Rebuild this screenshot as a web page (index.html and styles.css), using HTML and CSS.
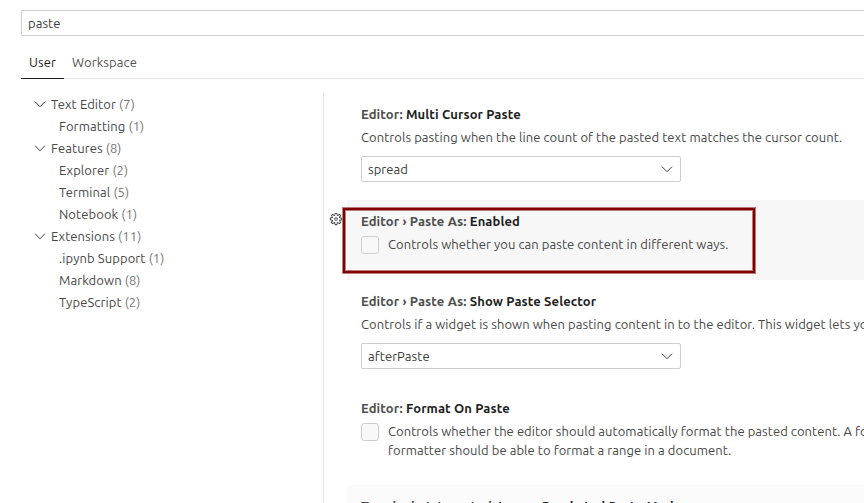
FILE: index.html
```html
<!DOCTYPE html>
<html lang="en">
<head>
    <meta charset="UTF-8">
    <meta name="viewport" content="width=device-width, initial-scale=1.0">
    <title>Settings</title>
    <link rel="stylesheet" href="styles.css">
</head>
<body>
    <svg class="symbols" xmlns="http://www.w3.org/2000/svg">
        <symbol id="chevron" viewBox="0 0 16 16">
            <path d="M3 5.7L8 10.7L13 5.7" fill="none" stroke="currentColor" stroke-width="1"/>
        </symbol>
    </svg>

    <div class="settings-editor">
        <div class="search-box">paste</div>

        <div class="tabs">
            <div class="tab active">User</div>
            <div class="tab">Workspace</div>
        </div>

        <div class="settings-body">
            <div class="toc">
                <div class="toc-group"><svg class="chevron"><use href="#chevron"/></svg>Text Editor <span class="count">(7)</span></div>
                <div class="toc-entry">Formatting <span class="count">(1)</span></div>
                <div class="toc-group"><svg class="chevron"><use href="#chevron"/></svg>Features <span class="count">(8)</span></div>
                <div class="toc-entry">Explorer <span class="count">(2)</span></div>
                <div class="toc-entry">Terminal <span class="count">(5)</span></div>
                <div class="toc-entry">Notebook <span class="count">(1)</span></div>
                <div class="toc-group"><svg class="chevron"><use href="#chevron"/></svg>Extensions <span class="count">(11)</span></div>
                <div class="toc-entry">.ipynb Support <span class="count">(1)</span></div>
                <div class="toc-entry">Markdown <span class="count">(8)</span></div>
                <div class="toc-entry">TypeScript <span class="count">(2)</span></div>
            </div>

            <div class="settings-list">
                <div class="setting">
                    <div class="title"><span class="category">Editor:</span> Multi Cursor Paste</div>
                    <div class="description">Controls pasting when the line count of the pasted text matches the cursor count.</div>
                    <div class="select">spread<svg class="chevron"><use href="#chevron"/></svg></div>
                </div>

                <div class="setting focused">
                    <svg class="gear" viewBox="0 0 16 16">
                        <path d="M9.1 4.4L8.6 2H7.4l-.5 2.4-.7.3-2-1.3-.9.8 1.3 2-.2.7-2.4.5v1.2l2.4.5.3.8-1.3 2 .8.8 2-1.3.8.3.4 2.3h1.200l.5-2.400.8-.3 2 1.300.8-.8-1.300-2 .3-.8 2.300-.4V7.400l-2.400-.5-.3-.8 1.300-2-.8-.8-2 1.300-.7-.2zM9.400 1l.5 2.400L12 2.100l2 2-1.400 2.100 2.400.4v2.800l-2.400.5L14 12l-2 2-2.100-1.400-.5 2.400H6.600l-.5-2.400L4 13.900l-2-2 1.400-2.100L1 9.400V6.600l2.400-.5L2.100 4l2-2 2.100 1.400.4-2.400h2.800zm.6 7c0 1.100-.9 2-2 2s-2-.9-2-2 .9-2 2-2 2 .9 2 2zM8 9c.6 0 1-.4 1-1s-.4-1-1-1-1 .4-1 1 .4 1 1 1z"/>
                    </svg>
                    <div class="title"><span class="category">Editor › Paste As:</span> Enabled</div>
                    <div class="check-row">
                        <div class="checkbox"></div>
                        <div class="description">Controls whether you can paste content in different ways.</div>
                    </div>
                    <div class="highlight"></div>
                </div>

                <div class="setting">
                    <div class="title"><span class="category">Editor › Paste As:</span> Show Paste Selector</div>
                    <div class="description">Controls if a widget is shown when pasting content in to the editor. This widget lets you control how the file is pasted.</div>
                    <div class="select">afterPaste<svg class="chevron"><use href="#chevron"/></svg></div>
                </div>

                <div class="setting multiline">
                    <div class="title"><span class="category">Editor:</span> Format On Paste</div>
                    <div class="check-row">
                        <div class="checkbox"></div>
                        <div class="description">Controls whether the editor should automatically format the pasted content. A formatter must be available and the<br>formatter should be able to format a range in a document.</div>
                    </div>
                </div>

                <div class="setting hovered">
                    <div class="title"><span class="category">Terminal › Integrated:</span> Ignore Bracketed Paste Mode</div>
                </div>
            </div>
        </div>
    </div>
</body>
</html>
```

FILE: styles.css
```css
* {
    box-sizing: border-box;
}
body {
    margin: 0;
    height: 503px;
    overflow: hidden;
    background-color: #fff;
    color: #3b3b3b;
    font-family: Ubuntu, "Noto Sans", sans-serif;
    font-size: 13px;
    letter-spacing: 0.06px;
    white-space: nowrap;
}
.symbols {
    display: none;
}
.settings-editor {
    padding: 10px 0 0 21px;
    height: 503px;
    display: flex;
    flex-direction: column;
    overflow: hidden;
}
.search-box {
    height: 26px;
    padding-left: 6px;
    border: 1px solid #cecece;
    border-right: 0;
    border-radius: 2px 0 0 2px;
    line-height: 25px;
    flex-shrink: 0;
}
.tabs {
    display: flex;
    height: 33px;
    margin-top: 10px;
    border-bottom: 1px solid #e5e5e5;
    flex-shrink: 0;
}
.tab {
    height: 33px;
    padding: 0 8px;
    line-height: 33px;
    color: #555;
    letter-spacing: 0.1px;
}
.tab.active {
    width: 43px;
    color: #1f1f1f;
    border-bottom: 1px solid #1f1f1f;
}
.settings-body {
    display: flex;
    padding-top: 14px;
    flex: 1;
    min-height: 0;
}
.toc {
    width: 303px;
    flex-shrink: 0;
    border-right: 1px solid #e5e5e5;
    color: #484848;
    letter-spacing: 0.09px;
}
.toc-group,
.toc-entry {
    height: 22px;
    line-height: 22px;
}
.toc-group {
    display: flex;
    align-items: center;
    padding-left: 11px;
    white-space: pre;
}
.toc-group .chevron {
    margin-right: 3px;
}
.toc-entry {
    padding-left: 38px;
}
.count {
    color: #757575;
}
.chevron {
    width: 16px;
    height: 16px;
    color: #3b3b3b;
}
.settings-list {
    flex: 1;
    min-width: 0;
    padding-left: 23px;
}
.setting {
    position: relative;
    padding: 12px 0 18px 14px;
}
.setting.focused {
    background-color: #f7f7f7;
    padding-bottom: 26px;
}
.setting.multiline {
    padding-bottom: 25px;
}
.setting.hovered {
    background-color: #fbfbfb;
}
.title {
    height: 18px;
    line-height: 18px;
    font-weight: 700;
    letter-spacing: 0.11px;
    color: #1f1f1f;
}
.category {
    color: #4f4f4f;
}
.description {
    line-height: 19px;
    margin-top: 5px;
    color: #484848;
}
.select {
    display: flex;
    align-items: center;
    justify-content: space-between;
    width: 320px;
    height: 26px;
    margin-top: 9px;
    padding: 0 5px 0 6px;
    border: 1px solid #cecece;
    border-radius: 2px;
}
.check-row {
    display: flex;
    margin-top: 5px;
}
.check-row .description {
    margin-top: 0;
}
.checkbox {
    width: 18px;
    height: 18px;
    margin: 1px 9px 0 0;
    background-color: #f8f8f8;
    border: 1px solid #cecece;
    border-radius: 3px;
    flex-shrink: 0;
}
.gear {
    position: absolute;
    left: -18px;
    top: 12px;
    width: 14px;
    height: 14px;
    fill: #3b3b3b;
}
/* frame drawn over the focused setting */
.highlight {
    position: absolute;
    left: -4px;
    top: 8px;
    width: 412px;
    height: 65px;
    border: 2px solid #800000;
    box-shadow: 0 0 0 1px rgba(128, 0, 0, 0.5), inset 0 0 0 1px rgba(128, 0, 0, 0.5);
}
```
